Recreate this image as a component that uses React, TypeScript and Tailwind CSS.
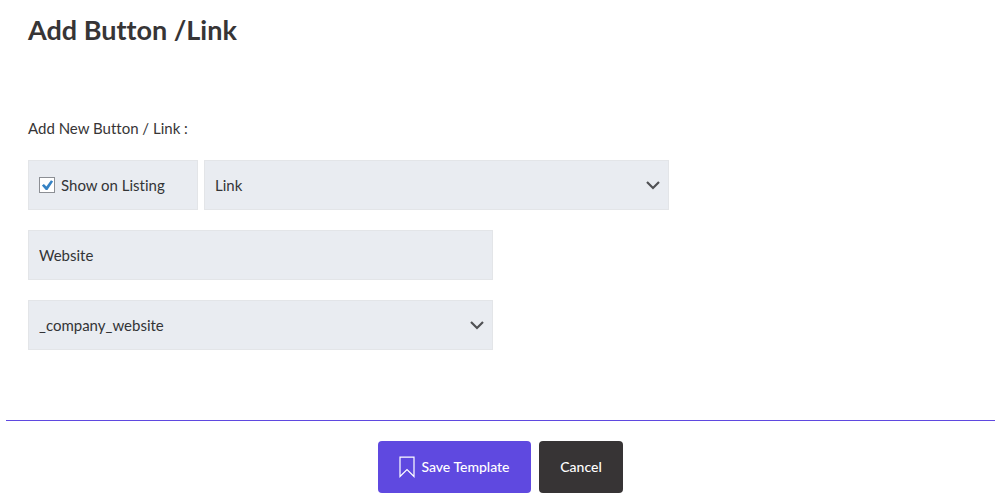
import React, { useState } from 'react';

interface SelectFieldProps {
  label: string;
  value: string;
  options: string[];
  onChange: (value: string) => void;
}

function SelectField({ label, value, options, onChange }: SelectFieldProps) {
  return (
    <div className="relative w-full max-w-[465px]">
      <select
        aria-label={label}
        value={value}
        onChange={(e) => onChange(e.target.value)}
        className="block w-full py-3 pl-[10px] pr-9 appearance-none rounded-none border border-[#e3e5e8] bg-[#e9ecf1] text-[15px] leading-6 text-[#333436] outline-none"
      >
        {options.map((option) => (
          <option key={option} value={option}>{option}</option>
        ))}
      </select>
      <svg
        viewBox="0 0 14 10"
        className="absolute right-[9px] top-5 w-[14px] h-[10px] pointer-events-none"
        fill="none"
        stroke="#505154"
        strokeWidth="2.2"
        aria-hidden="true"
      >
        <path d="M1 2 L7 8 L13 2" />
      </svg>
    </div>
  );
}

export default function App() {
  const [showOnListing, setShowOnListing] = useState(true);
  const [type, setType] = useState('Link');
  const [title, setTitle] = useState('Website');
  const [field, setField] = useState('_company_website');

  return (
    <form
      onSubmit={(e) => e.preventDefault()}
      className="bg-white pl-[6px] pr-[11px] font-['Lato',sans-serif] text-[15px] text-[#373536] [font-variant-ligatures:none]"
    >
      <div className="px-[22px] pt-3 pb-[70px]">
        <h1 className="text-[27px] leading-9 font-bold">Add Button /Link</h1>

        <h2 className="mt-[68px] text-[15px] leading-6">Add New Button / Link :</h2>

        <div className="mt-5 flex flex-col gap-5">
          <div className="flex gap-[6px]">
            <label className="flex w-[170px] shrink-0 items-center gap-[6px] border border-[#e3e5e8] bg-[#e9ecf1] py-3 px-[10px] text-[15px] leading-6 text-[#333436]">
              <span className="relative flex">
                <input
                  type="checkbox"
                  checked={showOnListing}
                  onChange={(e) => setShowOnListing(e.target.checked)}
                  className="w-4 h-4 appearance-none border border-[#8c8f94] bg-white"
                />
                {showOnListing && (
                  <svg viewBox="0 0 16 16" className="absolute inset-0 w-4 h-4 pointer-events-none" aria-hidden="true">
                    <path d="M2.9 8.4 L4.9 7.1 L7.4 9.5 L12 3.2 L14.1 4.4 L8.4 12.9 L6.8 12.9 Z" fill="#3582c4" />
                  </svg>
                )}
              </span>
              Show on Listing
            </label>
            <SelectField
              label="Type"
              value={type}
              options={['Link', 'Button']}
              onChange={setType}
            />
          </div>

          <input
            type="text"
            aria-label="Title"
            value={title}
            onChange={(e) => setTitle(e.target.value)}
            className="block w-full max-w-[465px] py-3 px-[10px] border border-[#e3e5e8] bg-[#e9ecf1] text-[15px] leading-6 text-[#333436] outline-none"
          />

          <SelectField
            label="Field"
            value={field}
            options={['_company_website', '_company_email', '_company_phone']}
            onChange={setField}
          />
        </div>
      </div>

      <div className="flex justify-center gap-2 border-t border-[#5f49e0] pt-5">
        <button
          type="submit"
          className="flex w-[153px] h-[52px] items-center justify-center gap-[6px] rounded bg-[#5f49e0] text-sm font-medium text-white"
        >
          <svg viewBox="0 0 16 22" className="w-4 h-[22px]" fill="none" stroke="currentColor" strokeWidth="1.2" aria-hidden="true">
            <path d="M1 1.2 H15 V20.5 L8 13.5 L1 20.5 Z" />
          </svg>
          Save Template
        </button>
        <button
          type="button"
          className="w-[84px] h-[52px] rounded bg-[#373435] text-sm font-medium text-white"
        >
          Cancel
        </button>
      </div>
    </form>
  );
}
